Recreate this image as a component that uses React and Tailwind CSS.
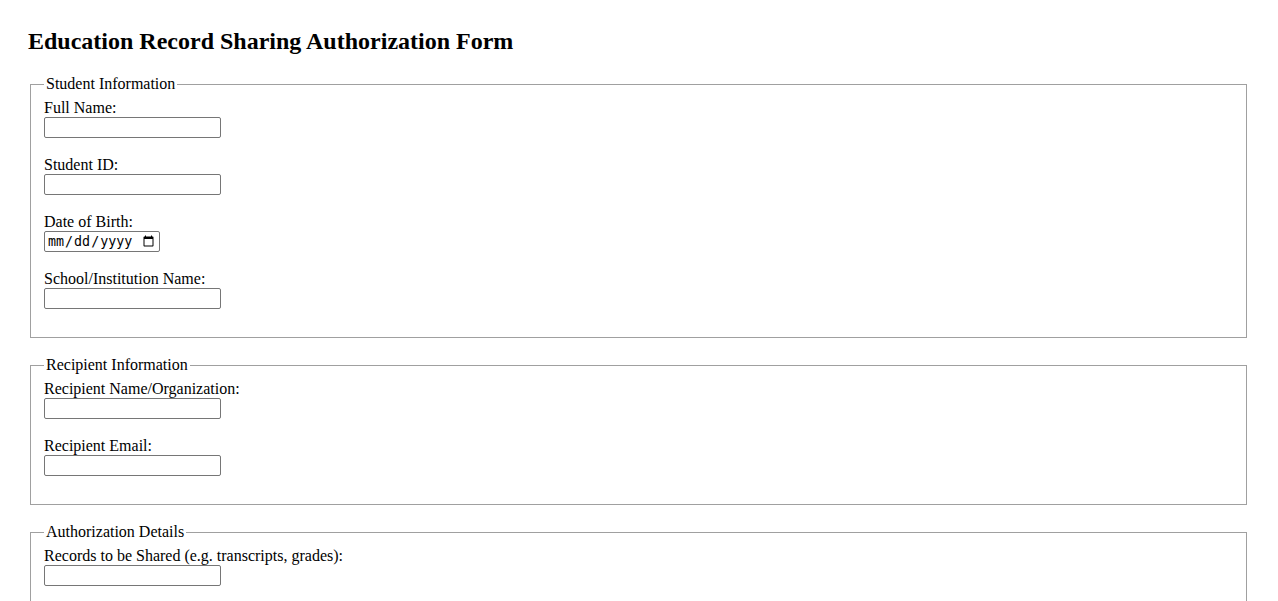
import React from 'react';

const inputCls =
  'block w-[177px] h-[21px] border border-[#767676] rounded-[2px] bg-white px-[2px] text-[13.33px] font-["Liberation_Sans",sans-serif]';

const Field = ({ label, type = 'text' }) => (
  <div className="mb-[18px]">
    <label className="block leading-[18px]">{label}</label>
    {type === 'date' ? (
      <input
        type="date"
        className="block w-[116px] h-[21px] border border-[#767676] rounded-[2px] bg-white px-[2px] text-[13.33px] font-['DejaVu_Sans_Mono',monospace]"
      />
    ) : (
      <input type={type} className={inputCls} />
    )}
  </div>
);

const Section = ({ title, fields, className = '' }) => (
  <fieldset
    className={`ml-[2px] mr-[3px] border border-[#a0a0a0] px-[13px] pt-[6px] pb-[10px] ${className}`}
  >
    <legend className="px-[2px] leading-[18px]">{title}</legend>
    {fields.map((f) => (
      <Field key={f.label} label={f.label} type={f.type} />
    ))}
  </fieldset>
);

export default function App() {
  return (
    <div className="min-h-screen bg-white px-[28px] pt-[27px] text-base text-black font-['Liberation_Serif',serif]">
      <h2 className="text-2xl font-bold leading-[28px] mb-[20px]">
        Education Record Sharing Authorization Form
      </h2>
      <form>
        <Section
          title="Student Information"
          fields={[
            { label: 'Full Name:' },
            { label: 'Student ID:' },
            { label: 'Date of Birth:', type: 'date' },
            { label: 'School/Institution Name:' },
          ]}
        />
        <Section
          className="mt-[18px]"
          title="Recipient Information"
          fields={[
            { label: 'Recipient Name/Organization:' },
            { label: 'Recipient Email:', type: 'email' },
          ]}
        />
        <Section
          className="mt-[18px]"
          title="Authorization Details"
          fields={[
            { label: 'Records to be Shared (e.g. transcripts, grades):' },
            { label: 'Purpose of Sharing:' },
          ]}
        />
      </form>
    </div>
  );
}
